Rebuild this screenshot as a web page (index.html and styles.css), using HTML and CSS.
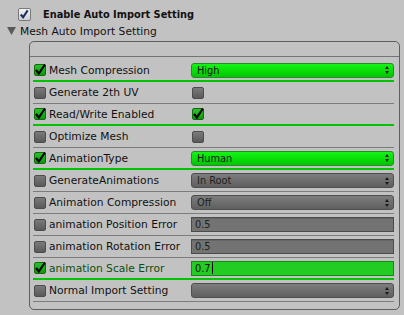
FILE: index.html
```html
<!DOCTYPE html>
<html lang="en">
<head>
  <meta charset="UTF-8">
  <meta name="viewport" content="width=device-width,initial-scale=1.0">
  <title>Mesh Auto Import Setting</title>
  <link rel="stylesheet" href="styles.css">
</head>
<body>
  <div class="top">
    <span class="cb-mac">
      <svg width="13" height="13" viewBox="0 0 13 13"><path d="M3 6.5 L5.5 9.5 L10.5 2" fill="none" stroke="#1c2f63" stroke-width="2.2"/></svg>
    </span>
    <span class="top-label">Enable Auto Import Setting</span>
  </div>

  <div class="foldout">
    <svg class="tri" width="9" height="8" viewBox="0 0 9 8"><polygon points="0,0 9,0 4.5,8" fill="#5a5a5a"/></svg>
    <span>Mesh Auto Import Setting</span>
  </div>

  <div class="panel">
    <div class="panel-head"></div>
    <div class="rows">

      <div class="row on">
        <div class="name"><span class="cb checked"><svg width="12" height="12" viewBox="0 0 12 12"><path d="M2 6 L4.8 9.5 L11 0.5" fill="none" stroke="#000" stroke-width="2.2"/></svg></span><span class="label">Mesh Compression</span></div>
        <div class="value"><div class="popup green"><span>High</span><svg class="arrows" width="4" height="8" viewBox="0 0 4 8"><polygon points="0,3 4,3 2,0" /><polygon points="0,5 4,5 2,8" /></svg></div></div>
      </div>

      <div class="row">
        <div class="name"><span class="cb"></span><span class="label">Generate 2th UV</span></div>
        <div class="value"><span class="cb"></span></div>
      </div>

      <div class="row on">
        <div class="name"><span class="cb checked"><svg width="12" height="12" viewBox="0 0 12 12"><path d="M2 6 L4.8 9.5 L11 0.5" fill="none" stroke="#000" stroke-width="2.2"/></svg></span><span class="label">Read/Write Enabled</span></div>
        <div class="value"><span class="cb checked"><svg width="12" height="12" viewBox="0 0 12 12"><path d="M2 6 L4.8 9.5 L11 0.5" fill="none" stroke="#000" stroke-width="2.2"/></svg></span></div>
      </div>

      <div class="row">
        <div class="name"><span class="cb"></span><span class="label">Optimize Mesh</span></div>
        <div class="value"><span class="cb"></span></div>
      </div>

      <div class="row on">
        <div class="name"><span class="cb checked"><svg width="12" height="12" viewBox="0 0 12 12"><path d="M2 6 L4.8 9.5 L11 0.5" fill="none" stroke="#000" stroke-width="2.2"/></svg></span><span class="label">AnimationType</span></div>
        <div class="value"><div class="popup green"><span>Human</span><svg class="arrows" width="4" height="8" viewBox="0 0 4 8"><polygon points="0,3 4,3 2,0" /><polygon points="0,5 4,5 2,8" /></svg></div></div>
      </div>

      <div class="row">
        <div class="name"><span class="cb"></span><span class="label">GenerateAnimations</span></div>
        <div class="value"><div class="popup"><span>In Root</span><svg class="arrows" width="4" height="8" viewBox="0 0 4 8"><polygon points="0,3 4,3 2,0" /><polygon points="0,5 4,5 2,8" /></svg></div></div>
      </div>

      <div class="row">
        <div class="name"><span class="cb"></span><span class="label">Animation Compression</span></div>
        <div class="value"><div class="popup"><span>Off</span><svg class="arrows" width="4" height="8" viewBox="0 0 4 8"><polygon points="0,3 4,3 2,0" /><polygon points="0,5 4,5 2,8" /></svg></div></div>
      </div>

      <div class="row">
        <div class="name"><span class="cb"></span><span class="label">animation Position Error</span></div>
        <div class="value"><div class="field">0.5</div></div>
      </div>

      <div class="row">
        <div class="name"><span class="cb"></span><span class="label">animation Rotation Error</span></div>
        <div class="value"><div class="field">0.5</div></div>
      </div>

      <div class="row on">
        <div class="name"><span class="cb checked"><svg width="12" height="12" viewBox="0 0 12 12"><path d="M2 6 L4.8 9.5 L11 0.5" fill="none" stroke="#000" stroke-width="2.2"/></svg></span><span class="label focus">animation Scale Error</span></div>
        <div class="value"><div class="field green">0.7<span class="caret"></span></div></div>
      </div>

      <div class="row">
        <div class="name"><span class="cb"></span><span class="label">Normal Import Setting</span></div>
        <div class="value"><div class="popup"><span></span><svg class="arrows" width="4" height="8" viewBox="0 0 4 8"><polygon points="0,3 4,3 2,0" /><polygon points="0,5 4,5 2,8" /></svg></div></div>
      </div>

    </div>
  </div>
</body>
</html>
```

FILE: styles.css
```css
body {
  margin: 0;
  background: #c2c2c2;
  font-family: "DejaVu Sans", sans-serif;
  font-size: 10.7px;
  color: #111;
}
.top {
  display: flex;
  align-items: center;
  height: 14px;
  padding: 7px 0 0 18px;
  gap: 12px;
}
.cb-mac {
  width: 13px;
  height: 13px;
  box-sizing: border-box;
  border: 1px solid #7a7a7a;
  border-radius: 2px;
  background: linear-gradient(#f4f4f4, #cfcfcf);
  display: flex;
}
.cb-mac svg { margin: -1px 0 0 -1px; }
.top-label {
  font-weight: bold;
  font-size: 9.8px;
  color: #111;
}
.foldout {
  display: flex;
  align-items: center;
  height: 18px;
  margin-top: 1px;
  padding-left: 7px;
  gap: 4px;
}
.panel {
  margin: 1px 4px 0 29px;
  border: 1px solid #5e5e5e;
  border-radius: 5px;
}
.panel-head {
  height: 14px;
  border-bottom: 1px solid #747474;
}
.rows {
  padding: 3px 5px 7px 3px;
}
.row {
  display: flex;
  align-items: center;
  height: 22px;
  box-sizing: border-box;
  border-bottom: 1px solid #7c7c7c;
}
.row.on {
  border-bottom: 2px solid #00c400;
}
.name {
  width: 158px;
  display: flex;
  align-items: center;
  gap: 3px;
}
.value {
  flex: 1;
  display: flex;
  align-items: center;
}
.cb {
  width: 12px;
  height: 12px;
  margin-left: 1px;
  box-sizing: border-box;
  border: 1px solid #4c4c4c;
  border-radius: 2px;
  background: linear-gradient(#7a7a7a, #5a5a5a);
  display: flex;
}
.cb.checked {
  border-color: #0b6e0b;
  background: linear-gradient(#2ec02e, #0d9a0d);
}
.cb svg { margin: -1px 0 0 -1px; overflow: visible; }
.label.focus { color: #0d4f0d; }
.popup {
  flex: 1;
  height: 15px;
  box-sizing: border-box;
  border: 1px solid #4f4f4f;
  border-radius: 3px;
  background: linear-gradient(#7d7d7d, #5f5f5f);
  display: flex;
  align-items: center;
  justify-content: space-between;
  padding: 0 4px 0 5px;
  font-size: 9.8px;
  color: #1e1e1e;
}
.popup.green {
  border-color: #2b8a2b;
  background: linear-gradient(#14f414, #00c600);
  color: #111;
}
.arrows { fill: #1a1a1a; }
.field {
  flex: 1;
  height: 15px;
  box-sizing: border-box;
  border: 1px solid #4c4c4c;
  background: #737373;
  box-shadow: inset 0 1px 0 #666;
  padding-left: 3px;
  display: flex;
  align-items: center;
  font-size: 9.8px;
  color: #1e1e1e;
}
.field.green {
  border-color: #138a13;
  background: #22cc22;
  box-shadow: none;
  color: #111;
}
.caret {
  width: 1px;
  height: 12px;
  background: #000;
  margin-left: 1px;
}
```
